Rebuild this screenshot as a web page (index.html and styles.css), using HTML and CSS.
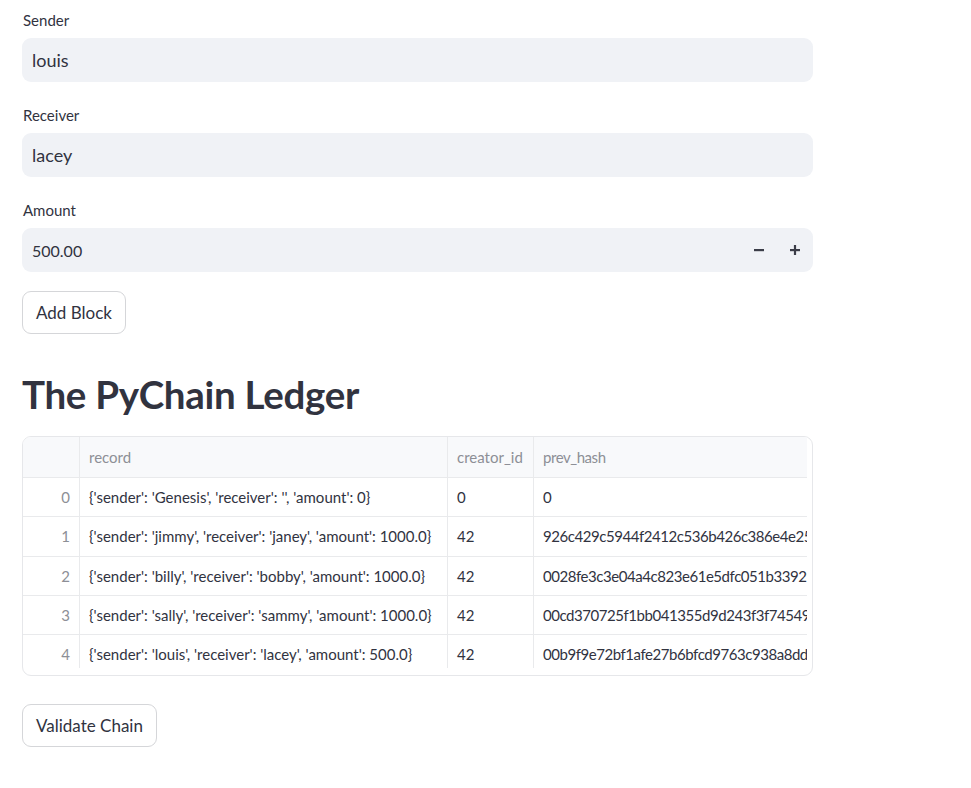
FILE: index.html
```html
<!DOCTYPE html>
<html>
<head>
<meta charset="utf-8">
<link rel="stylesheet" href="styles.css">
</head>
<body>
<main class="main">
  <div class="field">
    <label class="label">Sender</label>
    <div class="input"><span class="value">louis</span></div>
  </div>
  <div class="field">
    <label class="label">Receiver</label>
    <div class="input"><span class="value">lacey</span></div>
  </div>
  <div class="field field-last">
    <label class="label">Amount</label>
    <div class="input number">
      <span class="value num">500.00</span>
      <button class="step" aria-label="decrement">
        <svg width="10" height="10" viewBox="0 0 10 10"><rect x="0" y="4" width="10" height="2.2" fill="#3b3d48"/></svg>
      </button>
      <button class="step" aria-label="increment">
        <svg width="10" height="10" viewBox="0 0 10 10"><rect x="0" y="4" width="10" height="2.2" fill="#3b3d48"/><rect x="3.9" y="0" width="2.2" height="10" fill="#3b3d48"/></svg>
      </button>
    </div>
  </div>
  <div class="btn-row"><button class="btn">Add Block</button></div>

  <h2 class="title">The PyChain Ledger</h2>

  <div class="table-wrap">
    <div class="grid">
      <div class="row head">
        <div class="cell idx"></div>
        <div class="cell c-rec">record</div>
        <div class="cell c-cre">creator_id</div>
        <div class="cell c-hash">prev_hash</div>
      </div>
      <div class="row">
        <div class="cell idx">0</div>
        <div class="cell c-rec">{'sender': 'Genesis', 'receiver': '', 'amount': 0}</div>
        <div class="cell c-cre">0</div>
        <div class="cell c-hash">0</div>
      </div>
      <div class="row">
        <div class="cell idx">1</div>
        <div class="cell c-rec">{'sender': 'jimmy', 'receiver': 'janey', 'amount': 1000.0}</div>
        <div class="cell c-cre">42</div>
        <div class="cell c-hash">926c429c5944f2412c536b426c386e4e25bb3e6f2a</div>
      </div>
      <div class="row">
        <div class="cell idx">2</div>
        <div class="cell c-rec">{'sender': 'billy', 'receiver': 'bobby', 'amount': 1000.0}</div>
        <div class="cell c-cre">42</div>
        <div class="cell c-hash">0028fe3c3e04a4c823e61e5dfc051b33929a1f0c</div>
      </div>
      <div class="row">
        <div class="cell idx">3</div>
        <div class="cell c-rec">{'sender': 'sally', 'receiver': 'sammy', 'amount': 1000.0}</div>
        <div class="cell c-cre">42</div>
        <div class="cell c-hash">00cd370725f1bb041355d9d243f3f7454917c2e8</div>
      </div>
      <div class="row">
        <div class="cell idx">4</div>
        <div class="cell c-rec">{'sender': 'louis', 'receiver': 'lacey', 'amount': 500.0}</div>
        <div class="cell c-cre">42</div>
        <div class="cell c-hash">00b9f9e72bf1afe27b6bfcd9763c938a8dd4e51b</div>
      </div>
    </div>
  </div>

  <div class="btn-row btn-row-2"><button class="btn">Validate Chain</button></div>
</main>
</body>
</html>
```
FILE: styles.css
```css
* { box-sizing: border-box; }
html, body { margin: 0; padding: 0; background: #ffffff; }
body {
  font-family: "Lato", "Open Sans", sans-serif;
  color: #31333f;
}
.main {
  width: 813px;
  padding: 10px 0 40px 22px;
  display: flex;
  flex-direction: column;
}
.field { display: flex; flex-direction: column; margin-bottom: 23px; }
.field-last { margin-bottom: 19px; }
.label {
  font-size: 15px;
  line-height: 20px;
  height: 20px;
  margin-bottom: 8px;
  padding-left: 1px;
}
.input {
  height: 44px;
  background: #f0f2f6;
  border-radius: 9px;
  display: flex;
  align-items: center;
  padding-left: 10px;
}
.value { font-size: 18px; }
.value.num { font-size: 16px; flex: 1; }
.number { padding-right: 0; }
.step {
  width: 36px;
  height: 44px;
  border: 0;
  background: transparent;
  display: flex;
  align-items: center;
  justify-content: center;
  padding: 0;
}
.btn-row { display: flex; }
.btn {
  height: 43px;
  padding: 0 13px;
  border: 1px solid #d5d6d9;
  border-radius: 9px;
  background: #fff;
  font-family: inherit;
  font-size: 17px;
  color: #31333f;
}
.title {
  margin: 32px 0 0 0;
  font-size: 38.5px;
  line-height: 56px;
  height: 56px;
  font-weight: 700;
  letter-spacing: -0.3px;
}
.table-wrap {
  margin-top: 14px;
  width: 791px;
  height: 240px;
  border: 1px solid #e6e7ea;
  border-radius: 9px;
  overflow: hidden;
}
.grid {
  width: 784px;
  height: 231px;
  overflow: hidden;
}
.row {
  display: flex;
  height: 39.3px;
  border-bottom: 1px solid #e9eaec;
  font-size: 15px;
}
.row.head {
  height: 41px;
  background: #f8f9fb;
  color: #8d8f96;
}
.cell {
  display: flex;
  align-items: center;
  padding-left: 9px;
  white-space: nowrap;
  overflow: hidden;
  border-right: 1px solid #e9eaec;
}
.idx {
  width: 57px;
  flex: none;
  justify-content: flex-end;
  padding-right: 9px;
  color: #8d8f96;
}
.c-rec { width: 368px; flex: none; }
.c-cre { width: 86px; flex: none; }
.c-hash { flex: 1; border-right: 0; letter-spacing: -0.45px; }
.btn-row-2 { margin-top: 28px; }
```
